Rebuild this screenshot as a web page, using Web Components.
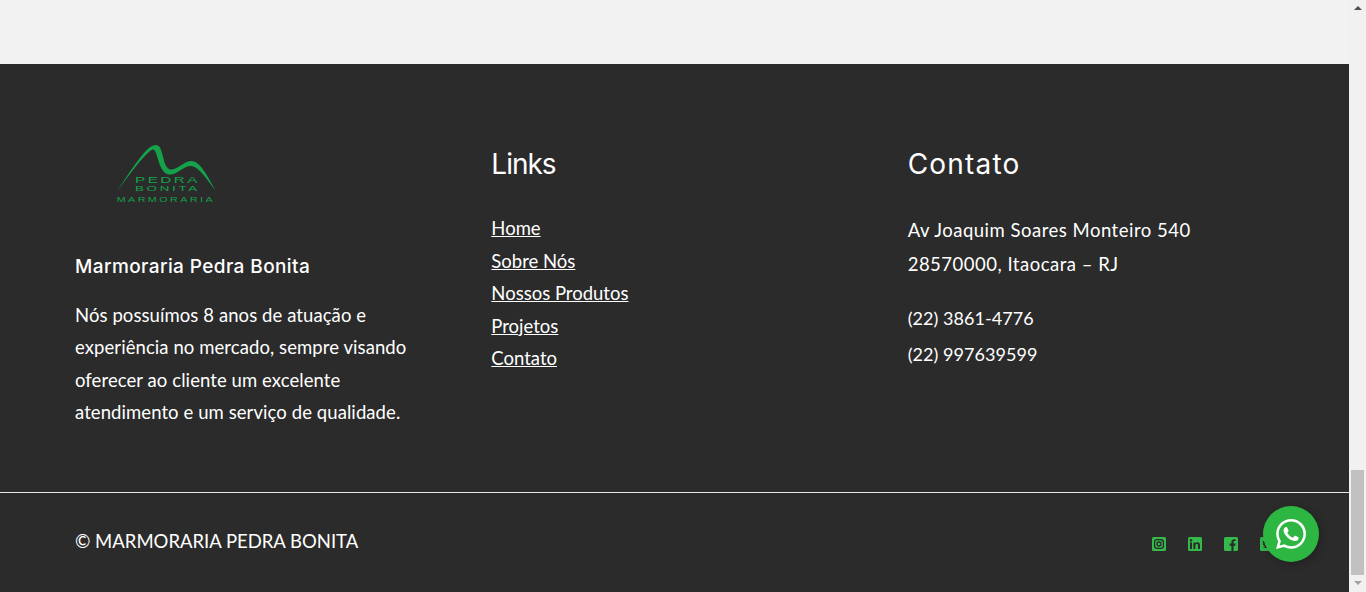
<!DOCTYPE html>
<html lang="pt-BR">
<head>
<meta charset="utf-8">
<title>Marmoraria Pedra Bonita</title>
<style>
  html, body { margin: 0; height: 100%; overflow: hidden; background: #f2f2f2; }
</style>
</head>
<body>
<site-page>
  <site-footer>
    <footer-col slot="about">
      <pedra-logo></pedra-logo>
      <h4 class="name">Marmoraria Pedra Bonita</h4>
      <p class="about">Nós possuímos 8 anos de atuação e<br>experiência no mercado, sempre visando<br>oferecer ao cliente um excelente<br>atendimento e um serviço de qualidade.</p>
    </footer-col>
    <footer-col slot="links" heading="Links" spacing="-1px">
      <link-list>
        <a href="#">Home</a>
        <a href="#">Sobre Nós</a>
        <a href="#">Nossos Produtos</a>
        <a href="#">Projetos</a>
        <a href="#">Contato</a>
      </link-list>
    </footer-col>
    <footer-col slot="contact" heading="Contato" spacing="1.2px">
      <contact-info></contact-info>
    </footer-col>
    <span slot="copy">© MARMORARIA PEDRA BONITA</span>
    <social-icons slot="social"></social-icons>
  </site-footer>
</site-page>
<whats-button></whats-button>

<script>
const fontText = '"Lato", "Liberation Sans", sans-serif'
const fontHead = '"Inter", "Open Sans", sans-serif'

customElements.define('site-page',
  class extends HTMLElement {
    constructor () {
      super()
      this.attachShadow({ mode: 'open' }).innerHTML = `
        <style>
          :host { display: flex; height: 592px; }
          main { flex: 1; min-width: 0; padding-top: 64px; background: #f2f2f2; }
          aside { width: 17px; display: flex; flex-direction: column; align-items: center; background: #f1f1f1; }
          .spacer { flex: 1; }
          .thumb { width: 13px; height: 105px; background: #c1c1c1; }
          .up, .down { width: 0; height: 0; border-left: 4px solid transparent; border-right: 4px solid transparent; }
          .up { border-bottom: 4px solid #505050; margin: 6px 0; }
          .down { border-top: 4px solid #a3a3a3; margin: 6px 0 7px; }
        </style>
        <main><slot></slot></main>
        <aside>
          <div class="up"></div>
          <div class="spacer"></div>
          <div class="thumb"></div>
          <div class="down"></div>
        </aside>`
    }
  })

customElements.define('site-footer',
  class extends HTMLElement {
    constructor () {
      super()
      this.attachShadow({ mode: 'open' }).innerHTML = `
        <style>
          :host { display: block; height: 528px; background: #2b2b2b; color: #fff; font-family: ${fontText}; }
          .cols { display: grid; grid-template-columns: repeat(3, 416.33px); padding: 79px 0 0 75px; height: 349px; box-sizing: content-box; }
          .bottom { border-top: 1px solid #e6e6e6; display: flex; justify-content: space-between; padding: 35px 75px 0; }
          .copy { font-size: 18.5px; line-height: 26px; }
          .social { margin-top: 9px; }
        </style>
        <div class="cols">
          <slot name="about"></slot>
          <slot name="links"></slot>
          <slot name="contact"></slot>
        </div>
        <div class="bottom">
          <div class="copy"><slot name="copy"></slot></div>
          <div class="social"><slot name="social"></slot></div>
        </div>`
    }
  })

customElements.define('footer-col',
  class extends HTMLElement {
    constructor () {
      super()
      const heading = this.getAttribute('heading')
      const spacing = this.getAttribute('spacing') || '0'
      this.attachShadow({ mode: 'open' }).innerHTML = `
        <style>
          :host { display: block; }
          h3 { margin: 0 0 27px; font: 400 28px/42px ${fontHead}; letter-spacing: ${spacing}; }
          ::slotted(.name) { margin: 46px 0 19px; font: 500 19px/27px ${fontHead}; letter-spacing: .4px; }
          ::slotted(.about) { margin: 0; font-size: 18.5px; letter-spacing: .08px; line-height: 32.4px; }
        </style>
        ${heading ? `<h3>${heading}</h3>` : ''}
        <slot></slot>`
    }
  })

customElements.define('pedra-logo',
  class extends HTMLElement {
    constructor () {
      super()
      this.attachShadow({ mode: 'open' }).innerHTML = `
        <style>
          :host { display: block; height: 64px; }
          svg { display: block; margin-left: 40px; }
          text { font-family: "Liberation Sans", sans-serif; fill: #14a14a; letter-spacing: 1.5px; }
        </style>
        <svg width="104" height="64" viewBox="0 0 104 64">
          <path fill="#14a14a" d="M2 48.500C14 30 26 11.500 34 5C39 1 43.500 .5 45.500 5.500C48.500 13 49.500 25.500 55 26.500C62 27.500 68 18.500 76 18C85 17.500 92.500 33 100.500 47.500C92 37 84 23.500 76 23C68 23 62 32.500 54 31.500C45.500 30.500 43.500 16 40.500 9C39.500 6 38 5.500 35 8C26 15.500 14 32 2 48.500Z"/>
          <text x="20" y="40.300" font-size="9" textLength="65" lengthAdjust="spacingAndGlyphs">PEDRA</text>
          <text x="20" y="48" font-size="7.500" textLength="65" lengthAdjust="spacingAndGlyphs">BONITA</text>
          <text x="1.700" y="59" font-size="6.500" textLength="98.300" lengthAdjust="spacingAndGlyphs">MARMORARIA</text>
        </svg>`
    }
  })

customElements.define('link-list',
  class extends HTMLElement {
    constructor () {
      super()
      this.attachShadow({ mode: 'open' }).innerHTML = `
        <style>
          :host { display: flex; flex-direction: column; align-items: flex-start; font-size: 18.5px; line-height: 32.5px; }
          ::slotted(a) { color: #fff; text-decoration: underline; }
        </style>
        <slot></slot>`
    }
  })

customElements.define('contact-info',
  class extends HTMLElement {
    constructor () {
      super()
      this.attachShadow({ mode: 'open' }).innerHTML = `
        <style>
          :host { display: block; padding-top: 1px; font-size: 18.5px; }
          p { margin: 0 0 18.500px; line-height: 34px; letter-spacing: .5px; }
          .phone { font-size: 18px; letter-spacing: .05px; line-height: 36px; }
        </style>
        <p>Av Joaquim Soares Monteiro 540<br>28570000, Itaocara – RJ</p>
        <p class="phone">(22) 3861-4776<br>(22) 997639599</p>`
    }
  })

customElements.define('social-icons',
  class extends HTMLElement {
    constructor () {
      super()
      this.attachShadow({ mode: 'open' }).innerHTML = `
        <style>
          :host { display: flex; gap: 22px; }
          svg { display: block; width: 14px; height: 14px; }
          .bg { fill: #34b94a; }
          .fg { fill: #2b2b2b; }
          .line { fill: none; stroke: #2b2b2b; stroke-width: 1.300; }
        </style>
        <svg viewBox="0 0 14 14">
          <rect class="bg" width="14" height="14" rx="1.500"/>
          <rect class="line" x="2.600" y="2.600" width="8.800" height="8.800" rx="2.300"/>
          <circle class="line" cx="7" cy="7" r="2"/>
          <circle class="fg" cx="9.900" cy="4.100" r=".6"/>
        </svg>
        <svg viewBox="0 0 14 14">
          <rect class="bg" width="14" height="14" rx="1.500"/>
          <rect class="fg" x="2" y="5.400" width="2" height="6.600"/>
          <circle class="fg" cx="3" cy="3.200" r="1.200"/>
          <path class="fg" d="M5.400 5.400h1.900v.9c.4-.7 1.200-1.100 2.100-1.100 2 0 2.600 1.300 2.600 3.100V12h-2V8.700c0-.9-.2-1.600-1.100-1.600-1 0-1.500.7-1.500 1.700V12h-2z"/>
        </svg>
        <svg viewBox="0 0 14 14">
          <rect class="bg" width="14" height="14" rx="1.500"/>
          <path class="fg" d="M7.400 14V8.700H5.600V6.600h1.800V5c0-1.800 1.100-2.800 2.700-2.800h1.500v1.900h-1c-.9 0-1.100.4-1.100 1.100v1.400h2.100l-.3 2.100H9.500V14z"/>
        </svg>
        <svg viewBox="0 0 14 14">
          <rect class="bg" width="14" height="14" rx="1.500"/>
          <path class="fg" d="M2.500 10.500c3.500 1.500 8.500 0 8.500-5.500l1-1.200-1.300.3C10 3 8 3 7.200 4.200 6.800 4.800 6.800 5.500 7 6 5.300 5.900 3.900 5 2.900 3.800c-.5 1 0 2.300.9 3l-1-.3c0 1.100.8 1.900 1.800 2.200l-1 .1c.3.700 1 1.200 1.800 1.200-.8.500-1.700.6-2.900.5z"/>
        </svg>`
    }
  })

customElements.define('whats-button',
  class extends HTMLElement {
    constructor () {
      super()
      this.attachShadow({ mode: 'open' }).innerHTML = `
        <style>
          :host { position: fixed; left: 1263px; top: 506px; width: 56px; height: 56px; border-radius: 50%; background: #2db742; box-shadow: 2px 2px 8px rgba(0,0,0,.25); display: flex; align-items: center; justify-content: center; }
          svg { display: block; width: 30px; height: 30px; }
        </style>
        <svg viewBox="0 0 24 24" fill="#fff">
          <path d="M17.472 14.382c-.297-.149-1.758-.867-2.030-.967-.273-.099-.471-.148-.670.150-.197.297-.767.966-.940 1.164-.173.199-.347.223-.644.075-.297-.150-1.255-.463-2.390-1.475-.883-.788-1.480-1.761-1.653-2.059-.173-.297-.018-.458.130-.606.134-.133.298-.347.446-.520.149-.174.198-.298.298-.497.099-.198.050-.371-.025-.520-.075-.149-.669-1.612-.916-2.207-.242-.579-.487-.500-.669-.510-.173-.008-.371-.010-.570-.010-.198 0-.520.074-.792.372-.272.297-1.040 1.016-1.040 2.479 0 1.462 1.065 2.875 1.213 3.074.149.198 2.096 3.200 5.077 4.487.709.306 1.262.489 1.694.625.712.227 1.360.195 1.871.118.571-.085 1.758-.719 2.006-1.413.248-.694.248-1.289.173-1.413-.074-.124-.272-.198-.570-.347m-5.421 7.403h-.004a9.870 9.870 0 01-5.031-1.378l-.361-.214-3.741.982.998-3.648-.235-.374a9.860 9.860 0 01-1.510-5.260c.001-5.450 4.436-9.884 9.888-9.884 2.640 0 5.122 1.030 6.988 2.898a9.825 9.825 0 012.893 6.994c-.003 5.450-4.437 9.884-9.885 9.884m8.413-18.297A11.815 11.815 0 0012.050 0C5.495 0 .160 5.335.157 11.892c0 2.096.547 4.142 1.588 5.945L.057 24l6.305-1.654a11.882 11.882 0 005.683 1.448h.005c6.554 0 11.890-5.335 11.893-11.893a11.821 11.821 0 00-3.480-8.413z"/>
        </svg>`
    }
  })
</script>
</body>
</html>
